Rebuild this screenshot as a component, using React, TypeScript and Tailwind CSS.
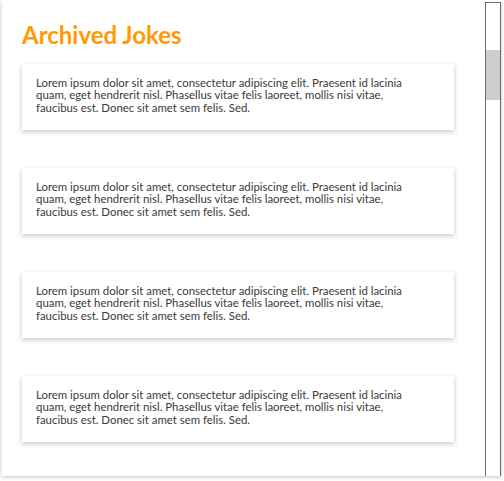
import React from 'react';

const LOREM =
  'Lorem ipsum dolor sit amet, consectetur adipiscing elit. Praesent id lacinia quam, eget hendrerit nisl. Phasellus vitae felis laoreet, mollis nisi vitae, faucibus est. Donec sit amet sem felis. Sed.';

const jokes = [LOREM, LOREM, LOREM, LOREM];

const JokeCard = ({ text }: { text: string }): React.JSX.Element => (
  <div className="h-[66px] w-[432px] shrink-0 bg-white pl-[14px] pr-[30px] pt-[13px] shadow-[0_2px_5px_rgba(0,0,0,0.22)]">
    <p className="text-[11.4px] leading-[12.3px] text-[#3a3a3a]">{text}</p>
  </div>
);

const App = (): React.JSX.Element => {
  return (
    <div
      className="h-[481px] w-[504px] bg-white"
      style={{ fontFamily: 'Lato, "Open Sans", sans-serif' }}
    >
      <div className="relative ml-[2px] h-[476px] w-[499px] overflow-hidden bg-white shadow-[0_1px_4px_rgba(0,0,0,0.25)]">
        <div className="flex flex-col pl-[20px]">
          <h1 className="mt-[20px] h-[30px] text-[24px] font-bold leading-[30px] text-[#ff9a05]">
            Archived Jokes
          </h1>
          <div className="mt-[14px] flex flex-col gap-[38px]">
            {jokes.map((j, i) => (
              <JokeCard key={i} text={j} />
            ))}
          </div>
        </div>

        {/* scrollbar */}
        <div className="absolute right-0 top-[2px] h-[476px] w-[16px] border border-[#6b6b6b] bg-white">
          <div className="mt-[47px] h-[50px] w-full bg-[#cdcdcd]" />
        </div>
      </div>
    </div>
  );
};

export default App;
